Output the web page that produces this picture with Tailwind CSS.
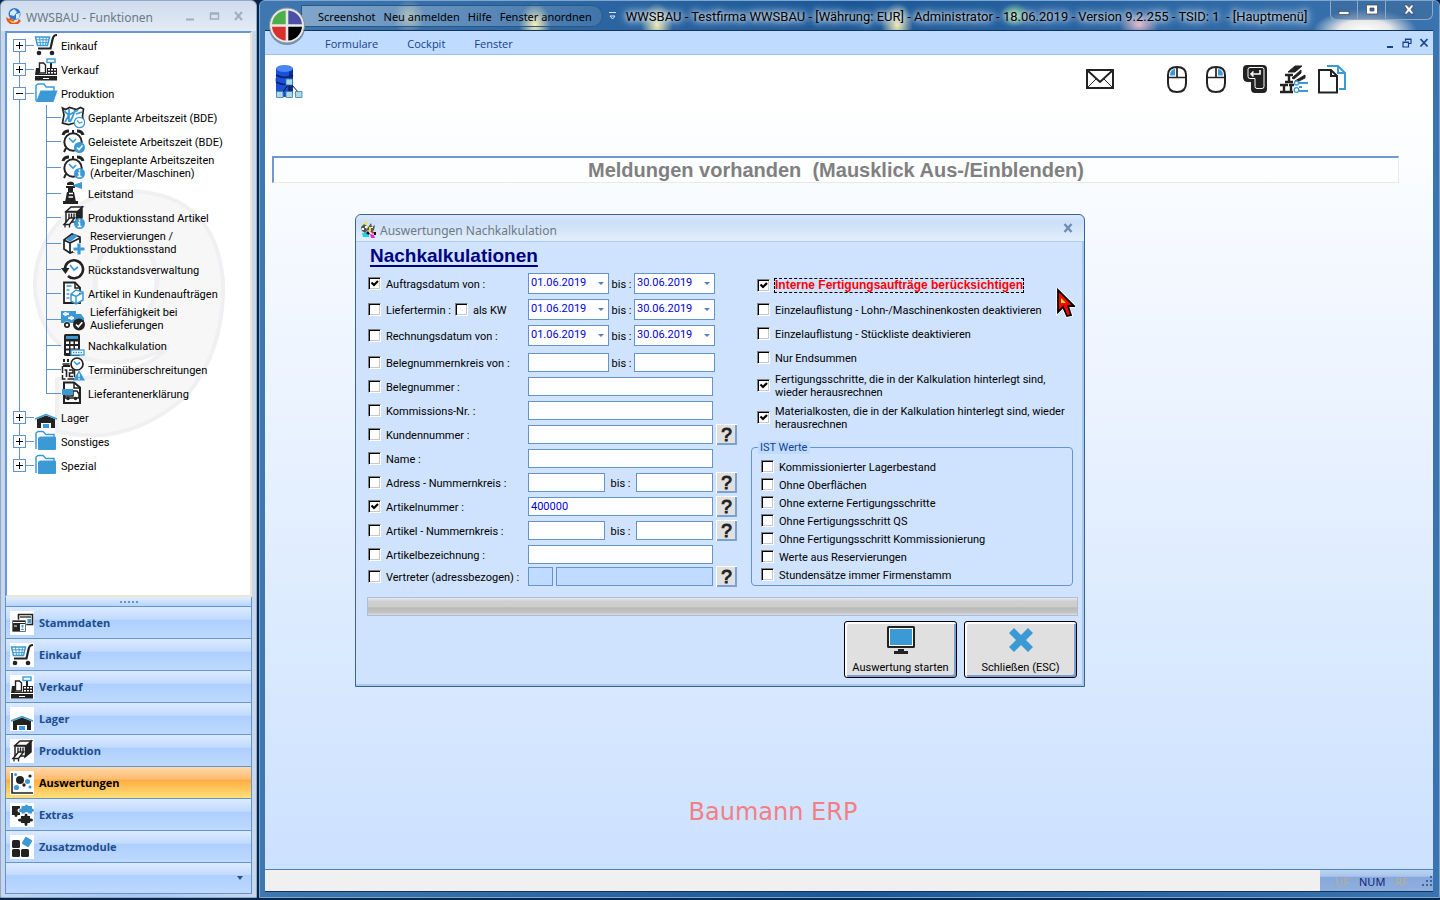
<!DOCTYPE html>
<html lang="de">
<head>
    <meta charset="UTF-8">
    <meta name="viewport" content="width=device-width, initial-scale=1.0">
    <title>WWSBAU - Hauptmenü</title>
    <script src="https://cdn.jsdelivr.net/npm/@tailwindcss/browser@4"></script>
</head>
<body class="h-screen flex gap-[2px] overflow-hidden bg-[#08264b] pb-[2px] font-['Roboto',sans-serif] text-[11px] leading-[13px] text-black">

    <!-- Icon library -->
    <svg class="hidden">
        <symbol id="i-cart" viewBox="0 0 24 24">
            <path d="M1.500 4h14l-2 8.500h-10z" fill="#fff" stroke="#3b9ad6" stroke-width="1.500"/>
            <path d="M5.500 4l1 8.500M9 4v8.500M12.500 4l-1 8.500M2 6.800h13M3 9.700h11" stroke="#3b9ad6" stroke-width="1" fill="none"/>
            <path d="M23 2c-3.500 0-4 2-4.500 4.500l-2 9H4" fill="none" stroke="#222" stroke-width="2.200"/>
            <circle cx="5" cy="20" r="2.300" fill="#222"/><circle cx="18" cy="20" r="2.300" fill="#222"/>
        </symbol>
        <symbol id="i-register" viewBox="0 0 24 24">
            <path d="M2 11h3v6h8v-6h10v7H1zM1 19h22v4.500H1z" fill="#222"/>
            <path d="M5.500 6h4l2 2v8h-6z" fill="#fff" stroke="#222" stroke-width="1.400"/>
            <path d="M17 5v6" stroke="#222" stroke-width="2"/>
            <rect x="13" y="2" width="8" height="3.500" fill="#fff" stroke="#3b9ad6" stroke-width="1.400"/>
            <path d="M14 12h2v1.500h-2zM17 12h2v1.500h-2zM20 12h2v1.500h-2zM14 15h2v1.500h-2zM17 15h2v1.500h-2zM20 15h2v1.500h-2zM9 21h6v1H9z" fill="#fff"/>
        </symbol>
        <symbol id="i-folder-open" viewBox="0 0 24 24">
            <path d="M2 20V4.500L4 3h6l2 3h8v4" fill="#fff" stroke="#3b9ad6" stroke-width="1.500"/>
            <path d="M6.500 9.500h17l-4 11.500H2z" fill="#3b9ad6"/>
        </symbol>
        <symbol id="i-folder" viewBox="0 0 24 24">
            <path d="M2 20V4l2-1.500h5l3 3h8V9" fill="#fff" stroke="#3b9ad6" stroke-width="1.500"/>
            <path d="M4 9l2-1.500h15q1 0 1 1.500v11q0 1-1 1H5q-1 0-1-1z" fill="#3b9ad6"/>
        </symbol>
        <symbol id="i-hall" viewBox="0 0 24 24">
            <path d="M3 14l9-3.500 9 3.500v9h-4v-5H7v5H3z" fill="#222"/>
            <path d="M1 14l11-4.500L23 14" fill="none" stroke="#3b9ad6" stroke-width="1.500"/>
            <path d="M9 19h6v4H9z" fill="#3b9ad6"/>
        </symbol>
        <symbol id="i-machine" viewBox="0 0 24 24">
            <path d="M15 7l6-5v11l-6 5z" fill="#222" stroke="#222" stroke-width="1.500"/>
            <path d="M5 7h10.500v10H5z" fill="#fff" stroke="#222" stroke-width="1.500"/>
            <path d="M10 2h11.500l-5 4.500H5z" fill="#fff" stroke="#222" stroke-width="1.500"/>
            <path d="M8 8.500v4.500M10.500 8.500v4.500M13 8.500v4.500" stroke="#222" stroke-width="1.400"/>
            <path d="M8.500 13h5l-5 6.500H3z" fill="#fff" stroke="#222" stroke-width="1.500"/>
            <path d="M4 20v2.500M8.500 20v2.500" stroke="#222" stroke-width="1.300"/>
        </symbol>
        <symbol id="i-alarm" viewBox="0 0 24 24">
            <path d="M2 6q1-4 6-4M22 6q-1-4-6-4" stroke="#222" stroke-width="3" fill="none"/>
            <path d="M12 1v4M5 19l-2 4" stroke="#222" stroke-width="2"/>
            <circle cx="12" cy="13" r="8.700" fill="#fff" stroke="#222" stroke-width="2"/>
            <path d="M8 9l4 4 3-3" fill="none" stroke="#3b9ad6" stroke-width="1.600"/>
        </symbol>
        <symbol id="i-alarm-ok" viewBox="0 0 24 24">
            <use href="#i-alarm"/><circle cx="18.500" cy="18.500" r="5.500" fill="#3b9ad6"/>
            <path d="M16 18.500l2 2 3.500-4" fill="none" stroke="#fff" stroke-width="1.600"/>
        </symbol>
        <symbol id="i-alarm-info" viewBox="0 0 24 24">
            <use href="#i-alarm"/><circle cx="18.500" cy="18.500" r="5.500" fill="#3b9ad6"/>
            <path d="M18.500 14.500v2M17 18h1.500v3.500M16.500 21.500h4" fill="none" stroke="#fff" stroke-width="1.500"/>
        </symbol>
        <symbol id="i-map" viewBox="0 0 24 24">
            <path d="M1.500 3l3 1.500 4-2 7 2 4-2 3 1.500-1 7 1 7-4 1-5-1-6 1.500-6-1.500 1.500-8z" fill="#fff" stroke="#222" stroke-width="1.700"/>
            <path d="M3 6l5 4-4 7M8 4v13M8 10l9-5M14 5l-2 6-3 6M15 9l6-2" fill="none" stroke="#3b9ad6" stroke-width="1.800"/>
            <circle cx="18.500" cy="17.500" r="5.200" fill="#fff" stroke="#3b9ad6" stroke-width="1.300"/>
            <path d="M16 15.500l2.500 2.500 3-1" fill="none" stroke="#3b9ad6" stroke-width="1.100"/>
        </symbol>
        <symbol id="i-tower" viewBox="0 0 24 24">
            <path d="M6 2q4-3 7 0v2H6zM5 5h9v2H5zM7 7h5v4H7zM6 11h7l2 10H4zM2 20h15v3H2z" fill="#222"/>
            <path d="M8 12.500h4M7.500 16h4.500" stroke="#fff" stroke-width="1.500"/>
            <path d="M12 4l9-3v7l-9-3z" fill="#3b9ad6"/>
        </symbol>
        <symbol id="i-machine-info" viewBox="0 0 24 24">
            <use href="#i-machine"/><circle cx="18.500" cy="18.500" r="5.500" fill="#3b9ad6"/>
            <path d="M18.500 14.500v2M17 18h1.500v3.500M16.500 21.500h4" fill="none" stroke="#fff" stroke-width="1.500"/>
        </symbol>
        <symbol id="i-box-plus" viewBox="0 0 24 24">
            <path d="M3 9l8-6 8 3v12l-10 4-6-4zM3 9l6 3v9M9 12l10-5" fill="#fff" stroke="#222" stroke-width="1.700"/>
            <path d="M5 8l8-5 4 2-8 6z" fill="#3b9ad6"/>
            <path d="M18 12v12M12 18h12" stroke="#fff" stroke-width="6"/>
            <path d="M18 12.500v11M12.500 18h11" stroke="#3b9ad6" stroke-width="3.200"/>
        </symbol>
        <symbol id="i-history" viewBox="0 0 24 24">
            <circle cx="13" cy="12" r="9" fill="#fff"/>
            <path d="M4 13a9 9 0 1 1 3 6" fill="none" stroke="#222" stroke-width="2.600"/>
            <path d="M0 11h8.500l-4 6z" fill="#222"/>
            <path d="M9 8l4 5 4-3" fill="none" stroke="#3b9ad6" stroke-width="1.700"/>
        </symbol>
        <symbol id="i-doc-box" viewBox="0 0 24 24">
            <path d="M3 1.500h11l5 5V22H3z" fill="#fff" stroke="#222" stroke-width="1.800"/>
            <path d="M14 2v5h5" fill="none" stroke="#222" stroke-width="1.500"/>
            <path d="M5.500 5h5M5.500 9h3M5.500 13h3M5.500 17h3" stroke="#3b9ad6" stroke-width="1.600"/>
            <path d="M10 13l5-4 7 2v8l-7 4-5-3zM10 13l5 2.500 7-4M15 15.500V22" fill="#fff" stroke="#3b9ad6" stroke-width="1.500"/>
        </symbol>
        <symbol id="i-truck" viewBox="0 0 24 24">
            <path d="M0 4h15v12H0zM15 7h5l3 4v5h-8z" fill="#3b9ad6"/>
            <path d="M2 7l3-2v1.300h3M2 7l3 2V7.500h3M13 11l-3-2v1.300H7M13 11l-3 2v-1.500H7" stroke="#fff" fill="#fff"/>
            <circle cx="6" cy="18" r="3.500" fill="#fff"/><circle cx="6" cy="18" r="2.200" fill="#fff" stroke="#222" stroke-width="1.700"/>
            <circle cx="18" cy="17.500" r="6" fill="#222"/>
            <path d="M15 17.500l2.300 2.300 4-4.500" fill="none" stroke="#fff" stroke-width="1.700"/>
        </symbol>
        <symbol id="i-calc" viewBox="0 0 24 24">
            <rect x="3" y="1" width="16" height="22" rx="1.500" fill="#222"/>
            <path d="M5 3h12v3H5z" fill="#3b9ad6"/>
            <path d="M5 8.500h3v2.500H5zM9.500 8.500h3v2.500h-3zM14 8.500h3v2.500h-3zM5 13h3v2.500H5zM9.500 13h3v2.500h-3zM14 13h3v2.500h-3zM5 17.500h3V20H5z" fill="#fff"/>
            <rect x="10" y="17" width="13" height="5" fill="#fff" stroke="#3b9ad6" stroke-width="1.300"/>
            <path d="M12 19.500h9" stroke="#3b9ad6" stroke-width="1.500" stroke-dasharray="1.500 1"/>
        </symbol>
        <symbol id="i-calendar-warn" viewBox="0 0 24 24">
            <path d="M1.500 7h12v15h-12z" fill="#fff" stroke="#222" stroke-width="1.500" stroke-dasharray="7 2"/>
            <path d="M3 5V2M7 5V2M2 9h7" stroke="#222" stroke-width="2"/>
            <path d="M3.500 13h2v7M8 13h4v3H8.500v3.500H12" fill="none" stroke="#222" stroke-width="1.600"/>
            <circle cx="16" cy="7" r="6" fill="#fff" stroke="#222" stroke-width="1.700"/>
            <path d="M13 4.500l3 3 3-2" fill="none" stroke="#3b9ad6" stroke-width="1.600"/>
            <path d="M18 13l6 10.500H12z" fill="#3b9ad6"/><path d="M18 16.500v3.500M18 21v1.500" stroke="#fff" stroke-width="1.400"/>
        </symbol>
        <symbol id="i-doc-truck" viewBox="0 0 24 24">
            <path d="M3 1.500h10l6 5V22H3z" fill="#fff" stroke="#222" stroke-width="2"/>
            <path d="M13 2v5h5" fill="none" stroke="#222" stroke-width="1.500"/>
            <path d="M12 10h4l2 3v4H4v-2h8z" fill="#fff" stroke="#222" stroke-width="1.500"/>
            <circle cx="7" cy="17.500" r="1.700" fill="#222"/><circle cx="14.500" cy="17.500" r="1.700" fill="#222"/>
            <path d="M1 8h11v6H1z" fill="#3b9ad6"/>
        </symbol>
        <symbol id="i-cards" viewBox="0 0 24 24">
            <path d="M8.500 3.500h14v10h-14z" fill="#fff" stroke="#222" stroke-width="1.600"/><path d="M10 6h11" stroke="#222" stroke-width="1.300"/>
            <path d="M17.500 8h3.500v4h-3.500z" fill="#3b9ad6"/>
            <path d="M2 9h14v12H2z" fill="#222" stroke="#fff" stroke-width=".7"/><path d="M3 11.500h12" stroke="#fff"/>
            <path d="M10 13h5v7h-5z" fill="#fff"/><path d="M10.500 19q2-3 4 0zM11.500 14h2v2.500h-2z" fill="#3b9ad6"/>
            <path d="M4 15h3" stroke="#fff"/>
        </symbol>
        <symbol id="i-scatter" viewBox="0 0 24 24">
            <path d="M2 2v20h21" fill="none" stroke="#222" stroke-width="1.600"/>
            <g fill="#222"><circle cx="10" cy="9" r="4"/><circle cx="20" cy="5" r="1.600"/><circle cx="14" cy="14" r="1.700"/></g>
            <g fill="#3b9ad6"><circle cx="5.500" cy="3.500" r="1.500"/><circle cx="17.500" cy="10.500" r="2.500"/><circle cx="6.500" cy="16.500" r="2.600"/><circle cx="20" cy="16" r="1.600"/></g>
        </symbol>
        <symbol id="i-puzzle" viewBox="0 0 24 24">
            <path d="M2 3h8v2.500q-2.500-.5-2.500 2T10 9.500V12H7.500q0 2-1.500 2t-1.500-2H2z" fill="#222"/>
            <path d="M11.500 3H15q0-1.500 1.500-1.500T18 3h4v2.500q2 0 2 1.700T22 9v1.500h-3.500q0-1.500-2-1.500t-2 1.500h-3V9q-2.500.5-2.500-1.500t2.500-2z" fill="#3b9ad6"/>
            <path d="M11 13h3.500q0-2.500 1.500-2.500t1.500 2.500H20v2.500q3-.5 3 1.500t-3 1.500V20h-2.500q0 3-1.500 3t-1.500-3H11v-1.500q-3 0-3-1.500t3-1.500z" fill="#222"/>
        </symbol>
        <symbol id="i-modules" viewBox="0 0 24 24">
            <rect x="2" y="5" width="8" height="8" rx="1.500" fill="#222"/><rect x="2" y="14" width="8" height="8" rx="1.500" fill="#222"/>
            <rect x="11" y="14" width="8" height="8" rx="1.500" fill="#222"/>
            <rect x="13" y="3" width="8" height="8" rx="1" fill="#3b9ad6" transform="rotate(30 17 7)"/>
        </symbol>
        <symbol id="i-mouse" viewBox="0 0 24 30">
            <path d="M3 11q0-8 9-8t9 8v8q0 9-9 9t-9-9z" fill="#fff" stroke="#222" stroke-width="2"/>
            <path d="M3 13.500h18M12 3v10.500" stroke="#222" stroke-width="1.700"/>
        </symbol>
    </svg>

    <!-- Function window -->
    <aside class="w-[257px] shrink-0 flex flex-col rounded-t-md border border-[#8fa9c8] bg-linear-to-r from-[#c8d7ec] via-[#a9c8f4] to-[#c8d7ec] px-[4px] pb-[3px]">
        <header class="-mx-[4px] h-[30px] shrink-0 flex items-center gap-1 rounded-t-md bg-linear-to-b from-[#cfdcec] to-[#e3ebf6] pl-[5px] pr-[8px]">
            <svg class="size-[16px]" viewBox="0 0 16 16">
                <circle cx="8.500" cy="6" r="6" fill="#2f78cf"/><path d="M4 4l4-3 3 3-3 4-4-1zM10 6l4-1-1 5-3 1z" fill="#d5ecfa"/>
                <path d="M0 9l3 2 2-2 1 3 3-1-2 4 4-1 2-3 2 2-3 3H4l-3-3z" fill="#e2571f"/><path d="M3 12l3 1 3 1-3 1z" fill="#ffd23e"/>
            </svg>
            <h1 class="flex-1 pt-[3px] font-['Noto_Sans',sans-serif] text-[12px] leading-4 text-[#6d7886]">WWSBAU - Funktionen</h1>
            <div class="flex items-center gap-1 text-[#a3adbc]">
                <button type="button" aria-label="Minimieren" class="size-5"><svg class="size-5" viewBox="0 0 20 20"><path d="M6 13.500h8" stroke="currentColor" stroke-width="2"/></svg></button>
                <button type="button" aria-label="Maximieren" class="size-5"><svg class="size-5" viewBox="0 0 20 20"><path d="M6.500 8h8v5h-8zM6 7h9" fill="none" stroke="currentColor" stroke-width="1.500"/></svg></button>
                <button type="button" aria-label="Schließen" class="size-5"><svg class="size-5" viewBox="0 0 20 20"><path d="M7 6l7 8M14 6l-7 8" stroke="currentColor" stroke-width="2"/></svg></button>
            </div>
        </header>

        <nav class="relative flex-1 min-h-0 overflow-hidden border-2 border-[#6496da] border-r-[#e9e7d4] border-b-[#e9e7d4] bg-white" aria-label="Funktionen">
            <!-- Watermark -->
            <svg class="absolute left-[26px] top-[152px] w-[192px] h-[260px]" viewBox="0 0 192 260">
                <path d="M96 6a94 94 0 0 0-94 98q6 62 62 72q40 6 72-16q-24 34-112 34v52q70 18 130-36q38-46 36-114Q182 8 96 6z" fill="#f7f7f8" stroke="#f0f0f2" stroke-width="4"/>
                <ellipse cx="93" cy="96" rx="31" ry="42" fill="#fcfcfc" stroke="#f0f0f2" stroke-width="5"/>
            </svg>
            <ul id="tree" class="relative pl-[6px]"></ul>
        </nav>

        <div class="h-[9px] shrink-0 flex items-center justify-center border-x border-[#6593cf] bg-linear-to-b from-[#e3efff] to-[#b5d3fb]">
            <div class="w-[18px] border-t-2 border-dotted border-[#6e93cb]"></div>
        </div>
        <div id="groups" class="shrink-0 flex flex-col border-x border-[#6593cf]"></div>
        <div class="h-[32px] shrink-0 flex items-center justify-end border border-[#6593cf] bg-[linear-gradient(#dbeaff,#c2dbff_40%,#adcfff_41%,#bdd9ff)] pr-2">
            <button type="button" aria-label="Weitere Gruppen"><svg class="w-[6px] h-[4px]" viewBox="0 0 6 4"><path d="M0 0h6L3 4z" fill="#2b4f8c"/></svg></button>
        </div>
    </aside>

    <!-- Main window -->
    <main class="relative flex-1 min-w-0 flex flex-col rounded-t-md border border-[#7fa6cf] bg-linear-to-r from-[#3f78b0] via-[#1b5797] to-[#3a74b0] pl-[5px] pr-[6px] pb-[5px]">
        <header class="relative h-[29px] shrink-0 -mr-[5px] flex items-center bg-[radial-gradient(16px_18px_at_144px_16px,#dcdcb090,transparent),radial-gradient(16px_22px_at_270px_24px,#f5edb0,transparent),radial-gradient(16px_22px_at_392px_24px,#f5edb0,transparent),radial-gradient(16px_22px_at_632px_24px,#f5edb0,transparent),radial-gradient(14px_12px_at_750px_14px,#7fd07f,transparent),radial-gradient(20px_12px_at_874px_24px,#e8b8c8,transparent),radial-gradient(52px_22px_at_1100px_30px,#fff,#e8e8e8_50%,transparent)]">
            <nav class="ml-[36px] h-[22px] flex items-center gap-2 rounded-r-full border border-[#2c5784] bg-linear-to-r from-white/35 to-white/10 pl-4 pr-[10px] pt-[2px] text-[11px] font-['Noto_Sans',sans-serif]" aria-label="Schnellzugriff">
                <a href="#">Screenshot</a>
                <a href="#">Neu anmelden</a>
                <a href="#">Hilfe</a>
                <a href="#">Fenster anordnen</a>
            </nav>
            <svg class="ml-[6px] w-[7px] h-[8px]" viewBox="0 0 7 8"><path d="M0 .5h7M1 4h5L3.500 7z" stroke="#d8e6f5" fill="none"/></svg>
            <h1 class="ml-[10px] pt-[2px] text-[13px] leading-4 whitespace-pre [text-shadow:0_0_5px_#fff,0_0_9px_#dce8f4,0_0_12px_#b8d0e8]">WWSBAU - Testfirma WWSBAU - [Währung: EUR] - Administrator - 18.06.2019 - Version 9.2.255 - TSID: 1  - [Hauptmenü]</h1>
            <div class="absolute right-[5px] top-0 flex h-[19px] rounded-b-md border border-t-0 border-[#8fa9c4] bg-[#3f6c9c]/60">
                <button type="button" aria-label="Minimieren" class="w-[27px] flex justify-center items-center border-r border-[#8fa9c4]"><svg class="w-3 h-3" viewBox="0 0 12 12"><path d="M1 7.500h10v3H1z" fill="#fff" stroke="#444" stroke-width=".7"/></svg></button>
                <button type="button" aria-label="Maximieren" class="w-[28px] flex justify-center items-center border-r border-[#8fa9c4]"><svg class="w-3 h-3" viewBox="0 0 12 12"><path d="M.5 1h11v9H.5zM4 4v3h4V4z" fill="#fff" fill-rule="evenodd" stroke="#444" stroke-width=".7"/></svg></button>
                <button type="button" aria-label="Schließen" class="w-[46px] flex justify-center items-center"><svg class="w-3 h-3" viewBox="0 0 12 12"><path d="M1 1h3l2 2.500L8 1h3L8 5.500 11 10H8L6 7.500 4 10H1l3-4.500z" fill="#fff" stroke="#444" stroke-width=".7"/></svg></button>
            </div>
        </header>

        <div class="h-[25px] shrink-0 flex items-center justify-between border-t border-b border-t-[#12335c] border-b-[#9dbfe8] bg-[#bfdbff] pl-[60px] pr-[4px] font-['Open_Sans',sans-serif] text-[11px] text-[#15428b]">
            <nav class="flex gap-[29px] pt-[2px]" aria-label="Menü">
                <a href="#">Formulare</a>
                <a href="#">Cockpit</a>
                <a href="#">Fenster</a>
            </nav>
            <div class="flex gap-[7px]">
                <button type="button" aria-label="Fenster minimieren"><svg class="size-[10px]" viewBox="0 0 10 10"><path d="M2 9h6" stroke="#15428b" stroke-width="2"/></svg></button>
                <button type="button" aria-label="Fenster wiederherstellen"><svg class="size-[10px]" viewBox="0 0 10 10"><path d="M3.500 3V1h5.500v4.500H7M1 4h5.500v5H1zM1 4.500h5.500M3.500 1.500H9" fill="none" stroke="#15428b" stroke-width="1.200"/></svg></button>
                <button type="button" aria-label="Fenster schließen"><svg class="size-[10px]" viewBox="0 0 10 10"><path d="M1.500 1l7 7.500M8.500 1l-7 7.500" stroke="#15428b" stroke-width="1.700"/></svg></button>
            </div>
        </div>

        <!-- Round application button -->
        <button type="button" aria-label="Anwendungsmenü" class="absolute left-[8px] top-[6px]">
            <svg class="size-[38px]" viewBox="0 0 38 38">
                <circle cx="19" cy="20" r="18" fill="#24466e" opacity=".5"/>
                <circle cx="19" cy="18.500" r="17.500" fill="#e6e8ea" stroke="#8b8f94"/>
                <path d="M17.700 17.200H4A15 15 0 0 1 17.700 3.500z" fill="#4fae48"/><path d="M20.300 17.200H34A15 15 0 0 0 20.300 3.500z" fill="#4b4fa6"/>
                <path d="M17.700 19.800H4a15 15 0 0 0 13.700 13.700z" fill="#d8302c"/><path d="M20.300 19.800H34a15 15 0 0 1-13.700 13.700z" fill="#000"/>
            </svg>
        </button>

        <section class="relative flex-1 min-h-0 flex flex-col bg-linear-to-b from-white from-5% to-[#cce1ff]">
            <div class="h-[101px] shrink-0 flex items-start justify-between pl-[10px] pr-[87px] pt-[9px]">
                <button type="button" aria-label="Datenbank">
                    <svg class="w-[28px] h-[35px]" viewBox="0 0 28 35">
                        <path d="M1 4v9q-1 3 0 5v9q0 6 9 6t8-6V4z" fill="#1a4fd8"/><path d="M14 4h4v25h-4z" fill="#0a2f9c"/>
                        <ellipse cx="9.500" cy="4.500" rx="8.500" ry="3.500" fill="#4c86f5"/>
                        <path d="M1 11q9 5 17 0M1 18q9 5 17 0" fill="none" stroke="#08226e" stroke-width="1.500"/>
                        <path d="M14 20l-7 9M14 20v9M16 20l8 9" stroke="#111"/>
                        <path d="M11 15h6.500v6H11zM1.500 27.500H8v6H1.500zM11 27.500h6.500v6H11zM20.500 27.500H27v6h-6.500z" fill="#a8d8ea" stroke="#3f7f9c" stroke-width=".8"/>
                    </svg>
                </button>
                <div class="flex items-center">
                    <button type="button" aria-label="Nachricht" class="mr-[51px]"><svg class="w-[28px] h-[20px]" viewBox="0 0 28 20"><path d="M1 1h26v18H1zM1 1l13 12L27 1" fill="none" stroke="#222" stroke-width="2"/><path d="M1 19l9-9M27 19l-9-9" stroke="#222" stroke-width="1"/></svg></button>
                    <button type="button" aria-label="Linke Maustaste" class="mr-[15px]"><svg class="w-[24px] h-[30px]" viewBox="0 0 24 30"><use href="#i-mouse"/><path d="M5 11.500q0-6 5-6.500v6.500z" fill="#3b9ad6"/></svg></button>
                    <button type="button" aria-label="Rechte Maustaste" class="mr-[14px]"><svg class="w-[24px] h-[30px]" viewBox="0 0 24 30"><use href="#i-mouse"/><path d="M19 11.500q0-6-5-6.500v6.500z" fill="#3b9ad6"/></svg></button>
                    <button type="button" aria-label="Eingabe" class="mr-[12px]"><svg class="w-[26px] h-[28px]" viewBox="0 0 26 28">
                        <path d="M5 0h16q4 0 4 4v20q0 4-4 4h-8q-4 0-4-4v-7H6q-5 0-5-5V4q0-4 4-4z" fill="#222"/>
                        <path d="M8 2.500h12q2 0 2 2v17q0 2-2 2h-5q-2 0-2-2v-8H8q-2 0-2-2v-7q0-2 2-2z" fill="none" stroke="#fff" stroke-width="1"/>
                        <path d="M18 5v4H9M11.500 6.500L9 9l2.500 2.500" fill="none" stroke="#fff" stroke-width="1.600"/></svg></button>
                    <button type="button" aria-label="Profile" class="mr-[10px]"><svg class="w-[28px] h-[29px]" viewBox="0 0 28 29">
                        <path d="M8 7l7-6h7l-7 6zM12 13l9-8v3l-7 6zM15 16l10-6v3l-8 4z" fill="#222" stroke="#222"/>
                        <path d="M5 10h8M5 17h8M9 10v7M0 20h8M0 27h13M4 20v7M9 20h5M11 20v7" stroke="#222" stroke-width="2.400"/>
                        <path d="M19 18h9M19 26h9M19 22h3" stroke="#3b9ad6" stroke-width="2"/><circle cx="16.500" cy="18" r="2" fill="#fff" stroke="#3b9ad6" stroke-width="1.300"/><circle cx="16.500" cy="25" r="2.300" fill="#fff" stroke="#3b9ad6" stroke-width="1.300"/></svg></button>
                    <button type="button" aria-label="Kopieren"><svg class="w-[28px] h-[29px]" viewBox="0 0 28 29">
                        <path d="M9 1h11l7 7v16h-6M20 1v7h7" fill="none" stroke="#3b9ad6" stroke-width="2"/>
                        <path d="M1 5h12l6 6v16.500H1zM13 5v6h6" fill="#fff" stroke="#222" stroke-width="2"/></svg></button>
                </div>
            </div>
            <button type="button" class="ml-[7px] mr-[34px] h-[27px] shrink-0 border-t-2 border-l-2 border-r border-b border-t-[#6f97d0] border-l-[#6f97d0] border-r-[#ece9dc] border-b-[#ece9dc] bg-white/50 text-center font-['Liberation_Sans',sans-serif] text-[20px] leading-6 font-bold text-[#808080] whitespace-pre">Meldungen vorhanden  (Mausklick Aus-/Einblenden)</button>
            <p class="mt-auto mb-[42px] mr-[152px] text-center font-['DejaVu_Sans',sans-serif] text-[24px] leading-[30px] text-[#f37f85]">Baumann ERP</p>

            <!-- Dialog -->
            <form id="dialog" class="absolute left-[90px] top-[159px] w-[730px] rounded-t-md border border-[#3c6193] bg-[#cfe3ff] shadow-[inset_-1px_-1px_0_1px_#a9c8ef] pb-[8px]">
                <header class="h-[27px] flex items-center justify-between rounded-t-md border-b border-[#a9cdf5] bg-[linear-gradient(#dce9fa,#cbdff8_25%,#e3eefb)] pl-[4px] pr-[11px]">
                    <div class="flex items-center gap-1 pt-[3px]">
                        <svg class="size-[16px]" viewBox="0 0 16 16">
                            <path d="M1 5l3-3 3 2-1 4 3-4 2-3 1 4 3-2-1 5-2 2-4-2-3 3-3-2z" fill="#555"/><path d="M2 6h2v2H2zM5 4h2v2H5zM11 5h2v1h-2z" fill="#fff"/>
                            <path d="M4 0h3v3H5zM9 5h2v4H9z" fill="#f5e52a"/><path d="M2 11h5v4H3zM7 13h2v2H7z" fill="#12d8e0"/><path d="M10 9l5 1-2 2z" fill="#e32020"/><path d="M10 12l4 1 1 3h-4z" fill="#e62bd8"/><path d="M8 9l2 3-2 1-2-2zM14 10h2v3h-2z" fill="#111"/>
                        </svg>
                        <h2 class="pt-[2px] font-['Noto_Sans',sans-serif] text-[12px] leading-4 text-[#6d7886]">Auswertungen Nachkalkulation</h2>
                    </div>
                    <button type="button" aria-label="Dialog schließen"><svg class="size-[10px]" viewBox="0 0 10 10"><path d="M1.500 1l7 8M8.500 1l-7 8" stroke="#6f8cb5" stroke-width="2.400"/></svg></button>
                </header>

                <div class="pl-[12px] pr-[7px]">
                    <h3 class="h-[31px] pl-[2px] pt-[2px] font-['Liberation_Sans',sans-serif] text-[19px] leading-6 font-bold text-[#000080] underline decoration-2 underline-offset-3">Nachkalkulationen</h3>
                    <div class="flex">
                        <div class="w-[370px] shrink-0">
                            <div id="dates" class="flex flex-col gap-[5px]"></div>
                            <div id="fields" class="mt-[7px] flex flex-col gap-[5px]"></div>
                        </div>
                        <div class="ml-[13px] mr-[4px] flex-1 flex flex-col">
                            <div id="options" class="pl-[6px]"></div>
                            <fieldset class="mt-[8px] h-[145px] rounded-[4px] border border-[#6593cf] pl-[9px]">
                                <legend class="-ml-[3px] bg-[#bfdbff] pl-[2px] pr-[3px] text-[#15428b]">IST Werte</legend>
                                <div id="actuals" class="pt-[3px]"></div>
                            </fieldset>
                        </div>
                    </div>
                    <div class="-ml-px -mr-px mt-[11px] h-[19px] border border-[#a9bfdc] bg-[linear-gradient(#e8e8e8,#cfcfcf_20%,#cdcdcd_52%,#b8b8b8_58%,#c4c4c4_85%,#dedede)]" role="progressbar" aria-label="Fortschritt"></div>
                    <div class="mt-[5px] flex justify-end gap-[7px]">
                        <button type="button" class="w-[113px] h-[57px] flex flex-col items-center justify-between rounded-[3px] border border-black bg-[#e0e0e0] pt-[4px] pb-[3px] shadow-[inset_2px_2px_0_#fff,inset_-2px_-2px_0_#7da0d4]">
                            <svg class="w-[28px] h-[28px]" viewBox="0 0 28 28"><rect width="28" height="22" rx="1.500" fill="#222"/><path d="M2 2h24v18H2z" fill="#fff"/><path d="M3 3h22v16H3z" fill="#3b9ad6"/><path d="M11 23h6v2h4v3H7v-3h4z" fill="#222"/></svg>
                            Auswertung starten
                        </button>
                        <button type="button" class="w-[113px] h-[57px] flex flex-col items-center justify-between rounded-[3px] border border-black bg-[#e0e0e0] pt-[4px] pb-[3px] shadow-[inset_2px_2px_0_#fff,inset_-2px_-2px_0_#7da0d4]">
                            <svg class="w-[28px] h-[28px]" viewBox="0 0 28 28"><path d="M7 2l7 7 7-7 5 5-7 7 7 7-5 5-7-7-7 7-5-5 7-7-7-7z" fill="#3b9ad6"/></svg>
                            Schließen (ESC)
                        </button>
                    </div>
                </div>
            </form>

            <!-- Mouse pointer -->
            <svg class="absolute left-[791px] top-[233px] w-[19px] h-[31px]" viewBox="0 0 19 31">
                <path d="M2 2v22l5-5 4 9 4-1-3-9h6z" fill="#f00" stroke="#fff" stroke-width="3.500"/><path d="M2 2v22l5-5 4 9 4-1-3-9h6z" fill="#f00" stroke="#000" stroke-width="1.800"/>
                <path d="M5 10l5 5H5z" fill="#ffe600"/>
            </svg>
        </section>

        <footer class="h-[23px] shrink-0 flex border-t border-b border-t-[#4f7fb8] border-b-[#12335c] bg-[#f0f0f0] font-['Noto_Sans',sans-serif] text-[11px]">
            <div class="ml-auto w-[113px] flex items-center bg-[linear-gradient(#bcd4f2,#a9c4ea_30%,#86a8da_35%,#90b0de)] pl-[15px] pt-[2px] text-[#b8ae90]">
                <span class="w-[24px]">UF</span>
                <span class="w-[36px] text-[#15207c]">NUM</span>
                <span>RF</span>
                <svg class="ml-auto size-[11px]" viewBox="0 0 11 11"><path d="M8 0h2v2H8zM4 4h2v2H4zM8 4h2v2H8zM0 8h2v2H0zM4 8h2v2H4zM8 8h2v2H8z" fill="#3f639c"/></svg>
            </div>
        </footer>
    </main>

    <script>
        const $ = (id) => document.getElementById(id);
        let nextId = 0;

        // Tree: [label, icon, state, children]
        const tree = [
            ["Einkauf", "i-cart", "+"],
            ["Verkauf", "i-register", "+"],
            ["Produktion", "i-folder-open", "-", [
                ["Geplante Arbeitszeit (BDE)", "i-map"],
                ["Geleistete Arbeitszeit (BDE)", "i-alarm-ok"],
                ["Eingeplante Arbeitszeiten<br>(Arbeiter/Maschinen)", "i-alarm-info"],
                ["Leitstand", "i-tower"],
                ["Produktionsstand Artikel", "i-machine-info"],
                ["Reservierungen /<br>Produktionsstand", "i-box-plus"],
                ["Rückstandsverwaltung", "i-history"],
                ["Artikel in Kundenaufträgen", "i-doc-box"],
                ["Lieferfähigkeit bei<br>Auslieferungen", "i-truck"],
                ["Nachkalkulation", "i-calc"],
                ["Terminüberschreitungen", "i-calendar-warn"],
                ["Lieferantenerklärung", "i-doc-truck"]
            ]],
            ["Lager", "i-hall", "+"],
            ["Sonstiges", "i-folder", "+"],
            ["Spezial", "i-folder", "+"]
        ];

        function child([label, icon], i, all) {
            const two = label.includes("<br>");
            return `<li class="relative flex items-center ${two ? "h-[28px]" : "h-[24px]"}">
                <span class="absolute left-0 top-0 w-px bg-[#6593cf] ${i === all.length - 1 ? "h-1/2" : "h-full"}"></span>
                <span class="w-[15px] h-px bg-[#6593cf]"></span>
                <svg class="size-[24px] shrink-0"><use href="#${icon}"/></svg>
                <a href="#" class="whitespace-nowrap ${two ? "pl-[5px]" : "pl-[3px] pt-[2px]"}">${label}</a>
            </li>`;
        }

        function root([label, icon, state, children], i, all) {
            const last = i === all.length - 1;
            return `<li class="relative">
                <span class="absolute left-[6px] w-px bg-[#6593cf] ${i === 0 ? "top-[12px] bottom-0" : last ? "top-0 h-[12px]" : "top-0 h-full"}"></span>
                <div class="relative flex items-center h-[24px]">
                    <button type="button" aria-label="${label} auf- oder zuklappen" class="size-[13px] border border-[#6593cf] bg-white">
                        <svg class="size-[11px]" viewBox="0 0 11 11"><path d="${state === "+" ? "M2 5.500h7M5.500 2v7" : "M2 5.500h7"}" stroke="#000"/></svg>
                    </button>
                    <span class="w-[8px] h-px bg-[#6593cf]"></span>
                    <svg class="size-[24px]"><use href="#${icon}"/></svg>
                    <a href="#" class="pl-[3px] pt-[2px]">${label}</a>
                </div>
                ${children ? `<ul class="ml-[33px]">${children.map(child).join("")}</ul>` : ""}
            </li>`;
        }
        $("tree").innerHTML = tree.map(root).join("");

        // Module groups below the tree
        const groups = [
            ["Stammdaten", "i-cards"], ["Einkauf", "i-cart"], ["Verkauf", "i-register"], ["Lager", "i-hall"],
            ["Produktion", "i-machine"], ["Auswertungen", "i-scatter"], ["Extras", "i-puzzle"], ["Zusatzmodule", "i-modules"]
        ];
        const active = "Auswertungen";
        $("groups").innerHTML = groups.map(([label, icon]) => `
            <button type="button" class="h-[32px] flex items-center gap-[5px] border-t border-[#6593cf] pl-[4px] font-['Open_Sans',sans-serif] text-[11px] font-bold ${label === active
                ? "text-black bg-[linear-gradient(#ffd9aa,#ffbb6e_40%,#ffab3f_41%,#fee17a)]"
                : "text-[#204d89] bg-[linear-gradient(#dbeaff,#c2dbff_40%,#adcfff_41%,#bdd9ff)]"}">
                <svg class="size-[24px] bg-white"><use href="#${icon}"/></svg>${label}
            </button>`).join("");

        // Form parts
        function check(label, checked, height, text = "") {
            const id = "c" + nextId++;
            return `<div class="flex items-center gap-[5px] ${height}">
                <span class="grid shrink-0">
                    <input type="checkbox" id="${id}" ${checked ? "checked" : ""} class="peer col-start-1 row-start-1 size-[13px] appearance-none border border-t-[#808080] border-l-[#808080] border-r-white border-b-white bg-white shadow-[inset_1px_1px_0_#000,inset_-1px_-1px_0_#c8c8c8]">
                    <svg class="hidden peer-checked:block pointer-events-none col-start-1 row-start-1 size-[13px]" viewBox="0 0 13 13"><path d="M3.500 5.500l2.500 2.500 4-4" fill="none" stroke="#000" stroke-width="2.200"/></svg>
                </span>
                <label for="${id}" class="whitespace-nowrap ${text || "pt-[2px]"}">${label}</label>
            </div>`;
        }

        const dateBox = (value, name) => `<span class="grid items-center">
            <select aria-label="${name}" class="col-start-1 row-start-1 w-[81px] h-[21px] appearance-none border border-[#6593cf] bg-white pl-[2px] pb-[2px] text-[#0000e0]"><option>${value}</option></select>
            <svg class="pointer-events-none col-start-1 row-start-1 justify-self-end mr-[5px] w-[6px] h-[3px]" viewBox="0 0 6 3"><path d="M0 0h6L3 3z" fill="#5a7fb8"/></svg>
        </span>`;
        const textBox = (name, width, value = "") => `<input type="text" aria-label="${name}" value="${value}" class="h-[19px] border border-[#6593cf] bg-white px-[2px] text-[#0000e0] disabled:bg-[#bfdbff] ${width}" ${width === "w-[25px]" || width === "w-[157px]" ? "disabled" : ""}>`;
        const help = `<button type="button" aria-label="Suchen" class="ml-[3px] w-[21px] h-[21px] shrink-0 bg-[#e0e0e0] font-['Liberation_Sans',sans-serif] text-[19px] leading-5 text-[#222] [-webkit-text-stroke:1px_#222] shadow-[inset_1px_1px_0_#fff,inset_-2px_-2px_0_#7da0d4]">?</button>`;

        const dates = [
            ["Auftragsdatum von :", true],
            ["Liefertermin :", false],
            ["Rechnungsdatum von :", false]
        ];
        $("dates").innerHTML = dates.map(([label, on], i) => `
            <div class="flex items-center h-[21px]">
                <div class="w-[160px] shrink-0 flex gap-[4px]">${check(label, on, "h-[21px]")}${i === 1 ? check("als KW", false, "h-[21px]") : ""}</div>
                <div class="w-[187px] flex items-center justify-between">${dateBox("01.06.2019", label + " von")}<span class="pt-[2px]">bis :</span>${dateBox("30.06.2019", label + " bis")}</div>
            </div>`).join("");

        // [label, layout, help button, value]
        const fields = [
            ["Belegnummernkreis von :", "range"],
            ["Belegnummer :", "full"],
            ["Kommissions-Nr. :", "full"],
            ["Kundennummer :", "full", true],
            ["Name :", "full"],
            ["Adress - Nummernkreis :", "narrow", true],
            ["Artikelnummer :", "full", true, "400000"],
            ["Artikel - Nummernkreis :", "narrow", true],
            ["Artikelbezeichnung :", "full"],
            ["Vertreter (adressbezogen) :", "split", true]
        ];
        $("fields").innerHTML = fields.map(([label, layout, q, value]) => {
            const bis = `<span class="pt-[2px]">bis :</span>`;
            const inner = {
                range: () => textBox(label, "w-[81px]") + bis + textBox(label + " bis", "w-[81px]"),
                narrow: () => textBox(label, "w-[77px]") + bis + textBox(label + " bis", "w-[77px]"),
                full: () => textBox(label, "w-full", value),
                split: () => textBox(label, "w-[25px]") + textBox(label + " Name", "w-[157px]")
            }[layout]();
            return `<div class="flex items-center h-[19px] ${layout === "split" ? "-mt-[2px]" : ""}">
                <div class="w-[160px] shrink-0">${check(label, !!value, "h-[19px]")}</div>
                <div class="${layout === "range" ? "w-[187px]" : "w-[185px]"} flex items-center justify-between">${inner}</div>
                ${q ? help : ""}
            </div>`;
        }).join("");

        $("options").innerHTML =
            check("Interne Fertigungsaufträge berücksichtigen", true, "h-[24px]", "font-['Liberation_Sans',sans-serif] text-[12px] font-bold text-[#f00] outline-1 outline-dashed outline-black") +
            check("Einzelauflistung - Lohn-/Maschinenkosten deaktivieren", false, "h-[24px]") +
            check("Einzelauflistung - Stückliste deaktivieren", false, "h-[24px]") +
            check("Nur Endsummen", false, "h-[24px]") +
            check("Fertigungsschritte, die in der Kalkulation hinterlegt sind,<br>wieder herausrechnen", true, "h-[32px]") +
            check("Materialkosten, die in der Kalkulation hinterlegt sind, wieder<br>herausrechnen", true, "h-[32px]");

        $("actuals").innerHTML = [
            "Kommissionierter Lagerbestand", "Ohne Oberflächen", "Ohne externe Fertigungsschritte", "Ohne Fertigungsschritt QS",
            "Ohne Fertigungsschritt Kommissionierung", "Werte aus Reservierungen", "Stundensätze immer Firmenstamm"
        ].map((label) => check(label, false, "h-[18px]")).join("");
    </script>
</body>
</html>
